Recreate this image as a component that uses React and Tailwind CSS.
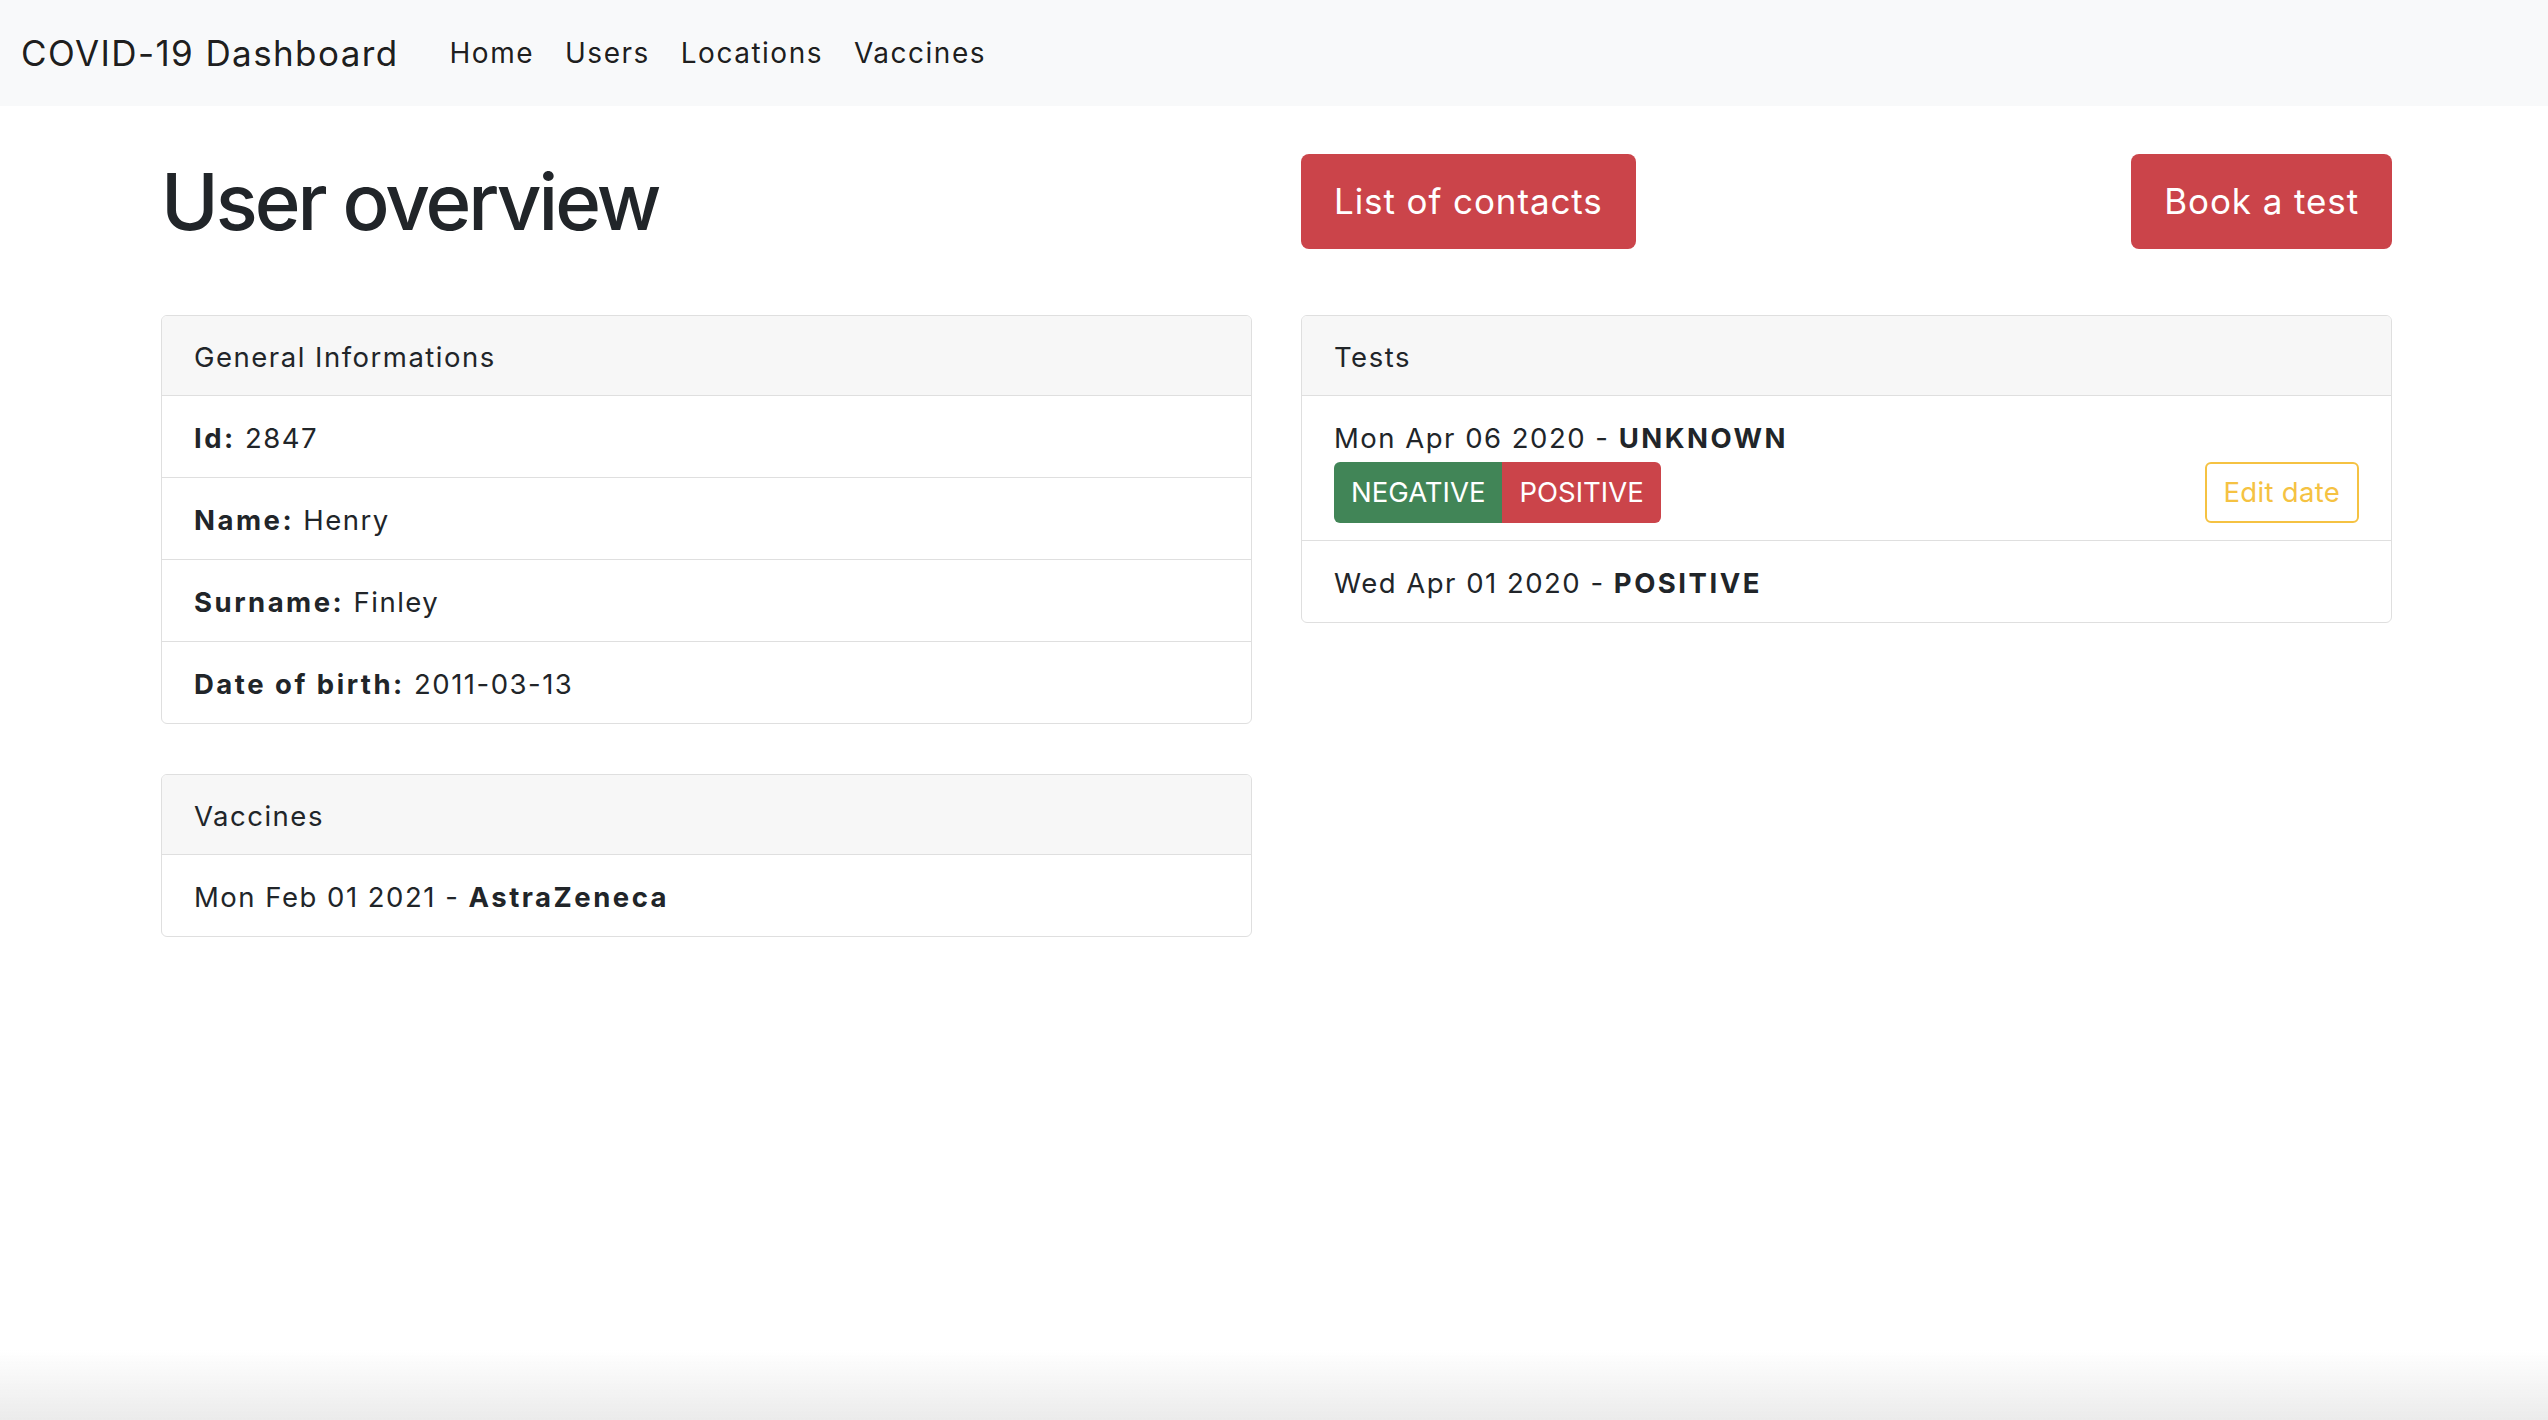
const Card = ({ title, children }) => (
  <div className="border border-[#dfdfdf] rounded-[6px] bg-white overflow-hidden">
    <div className="bg-[#f7f7f7] border-b border-[#dfdfdf] px-[32px] pt-[21px] pb-[17px] leading-[41px]">
      {title}
    </div>
    {children}
  </div>
);

const Item = ({ children, last }) => (
  <div className={`px-[32px] pt-[22px] pb-[18px] leading-[41px] ${last ? '' : 'border-b border-[#dfdfdf]'}`}>
    {children}
  </div>
);

const B = ({ children }) => <b className="font-bold tracking-[2.5px]">{children}</b>;

export default function App() {
  return (
    <div
      className="min-h-screen bg-white text-[#212529] text-[27.5px] tracking-[1.5px]"
      style={{ fontFamily: 'Inter, "Liberation Sans", sans-serif' }}
    >
      {/* Navbar */}
      <nav className="h-[106px] bg-[#f8f9fa] flex items-center px-[21px]">
        <span className="text-[35px] tracking-[1.4px] text-black/90 mr-[51px]">COVID-19 Dashboard</span>
        <div className="flex gap-[31px] text-[28px] tracking-[1.5px] text-black/90">
          <a>Home</a>
          <a>Users</a>
          <a>Locations</a>
          <a>Vaccines</a>
        </div>
      </nav>

      <div className="ml-[161px] mr-[156px]">
        {/* Header row */}
        <div className="grid grid-cols-2 gap-[49px] items-center mt-[48px]">
          <h1 className="text-[78px] font-medium leading-[90px] tracking-[-3px]">User overview</h1>
          <div className="flex justify-between">
            <button className="bg-[#cb444a] text-white text-[35px] tracking-[0.9px] h-[95px] px-[33px] rounded-[8px]">
              List of contacts
            </button>
            <button className="bg-[#cb444a] text-white text-[35px] tracking-[0.9px] h-[95px] px-[33px] rounded-[8px]">
              Book a test
            </button>
          </div>
        </div>

        {/* Cards */}
        <div className="grid grid-cols-2 gap-[49px] items-start mt-[66px]">
          <div className="flex flex-col gap-[50px]">
            <Card title="General Informations">
              <Item>
                <B>Id:</B> 2847
              </Item>
              <Item>
                <B>Name:</B> Henry
              </Item>
              <Item>
                <B>Surname:</B> Finley
              </Item>
              <Item last>
                <B>Date of birth:</B> 2011-03-13
              </Item>
            </Card>

            <Card title="Vaccines">
              <Item last>
                Mon Feb 01 2021 - <B>AstraZeneca</B>
              </Item>
            </Card>
          </div>

          <Card title="Tests">
            <div className="px-[32px] pt-[22px] pb-[17px] border-b border-[#dfdfdf]">
              <div className="leading-[41px]">
                Mon Apr 06 2020 - <B>UNKNOWN</B>
              </div>
              <div className="flex justify-between items-center mt-[3px]">
                <div className="flex tracking-normal">
                  <button className="bg-[#418557] text-white h-[61px] px-[17px] rounded-l-[6px]">
                    NEGATIVE
                  </button>
                  <button className="bg-[#cb444a] text-white h-[61px] px-[17px] rounded-r-[6px]">
                    POSITIVE
                  </button>
                </div>
                <button className="border-2 border-[#f5c242] text-[#f5c242] tracking-[0.3px] h-[61px] px-[17px] rounded-[6px]">
                  Edit date
                </button>
              </div>
            </div>
            <Item last>
              Wed Apr 01 2020 - <B>POSITIVE</B>
            </Item>
          </Card>
        </div>
      </div>

      {/* bottom window shade */}
      <div className="fixed bottom-0 left-0 right-0 h-[70px] pointer-events-none bg-gradient-to-b from-transparent to-[#ebebeb]" />
    </div>
  );
}
